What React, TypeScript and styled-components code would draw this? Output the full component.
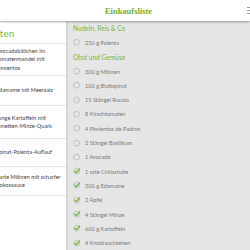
import React from "react";
import styled, { createGlobalStyle } from "styled-components";

const GlobalStyle = createGlobalStyle`
  html, body { margin: 0; padding: 0; }
  body {
    background: #e6e6e6;
    font-family: Lato, "Open Sans", sans-serif;
    overflow: hidden;
  }
`;

const Page = styled.div`
  width: 250px;
  height: 250px;
  display: flex;
  flex-direction: column;
  overflow: hidden;
`;

const Header = styled.header`
  height: 21px;
  flex: none;
  background: #ffffff;
  display: grid;
  grid-template-columns: 1fr auto 1fr;
  align-items: center;
  box-shadow: 0 1px 2px rgba(0, 0, 0, 0.35);
  position: relative;
  z-index: 2;
`;

const Title = styled.h1`
  grid-column: 2;
  margin: 0 0 0 7px;
  font-family: "Liberation Serif", serif;
  font-weight: bold;
  font-size: 8.5px;
  color: #76ad36;
`;

const MenuIcon = styled.div`
  grid-column: 3;
  justify-self: end;
  margin-right: -2px;
  width: 5px;
  height: 7px;
  display: flex;
  flex-direction: column;
  justify-content: space-between;
  span {
    display: block;
    height: 1px;
    background: #9a9a9a;
  }
`;

const Body = styled.div`
  flex: 1;
  display: flex;
  min-height: 0;
`;

const Sidebar = styled.aside`
  width: 74px;
  margin-left: -8px;
  flex: none;
  background: #ffffff;
  border-right: 1px solid #d6d6d6;
  box-shadow: 1px 0 1px rgba(0, 0, 0, 0.06);
  display: flex;
  flex-direction: column;
  padding-top: 1px;
`;

const SideTitle = styled.div`
  height: 21px;
  display: flex;
  align-items: center;
  border-bottom: 1px solid #e4e4e4;
  overflow: hidden;
  span {
    margin-left: -12px;
    font-size: 10px;
    color: #7ab53a;
  }
`;

const Recipe = styled.div<{ $h: number }>`
  height: ${(p) => p.$h}px;
  display: flex;
  align-items: center;
  padding-left: 4px;
  border-bottom: 1px solid #e4e4e4;
  font-size: 5.6px;
  line-height: 8.3px;
  color: #454545;
`;

const Main = styled.main`
  flex: 1;
  padding-left: 6px;
  display: flex;
  flex-direction: column;
`;

const Section = styled.div`
  height: 14.3px;
  display: flex;
  align-items: center;
  font-size: 6.6px;
  color: #7ab53a;
`;

const Item = styled.div`
  height: 14.3px;
  display: flex;
  align-items: center;
  gap: 4px;
  font-size: 5.6px;
  color: #7a7a7a;
`;

const Check = ({ on }: { on: boolean }) => (
  <svg width="8" height="8" viewBox="0 0 8 8" style={{ flex: "none", overflow: "visible" }}>
    <circle cx="3.6" cy="4.2" r="2.9" fill="none" stroke="#a8a8a8" strokeWidth="0.6" />
    {on && (
      <path d="M1.8 4.1 L3.3 5.6 L6.6 2.0" fill="none" stroke="#6fb234" strokeWidth="1.2" strokeLinecap="round" strokeLinejoin="round" />
    )}
  </svg>
);

const recipes: { lines: string[]; h: number }[] = [
  { lines: ["Avocadobällchen im", "Tomatenmandel mit", "Pimientos"], h: 31 },
  { lines: ["Edamame mit Meersalz"], h: 29 },
  { lines: ["Junge Kartoffeln mit", "Limetten-Minze-Quark"], h: 32 },
  { lines: ["Spinat-Polenta-Auflauf"], h: 27 },
  { lines: ["Zarte Möhren mit scharfer", "Kokossauce"], h: 28 },
];

type Row = { kind: "section"; text: string } | { kind: "item"; text: string; on: boolean };

const rows: Row[] = [
  { kind: "section", text: "Nudeln, Reis & Co" },
  { kind: "item", text: "250 g Polenta", on: false },
  { kind: "section", text: "Obst und Gemüse" },
  { kind: "item", text: "300 g Möhren", on: false },
  { kind: "item", text: "100 g Blattspinat", on: false },
  { kind: "item", text: "15 Stängel Rucola", on: false },
  { kind: "item", text: "8 Kirschtomaten", on: false },
  { kind: "item", text: "4 Pimientos de Padron", on: false },
  { kind: "item", text: "2 Stängel Basilikum", on: false },
  { kind: "item", text: "1 Avocado", on: false },
  { kind: "item", text: "1 rote Chilischote", on: true },
  { kind: "item", text: "500 g Edamame", on: true },
  { kind: "item", text: "2 Äpfel", on: true },
  { kind: "item", text: "4 Stängel Minze", on: true },
  { kind: "item", text: "600 g Kartoffeln", on: true },
  { kind: "item", text: "4 Knoblauchzehen", on: true },
];

export default function App() {
  return (
    <Page>
      <GlobalStyle />
      <Header>
        <Title>Einkaufsliste</Title>
        <MenuIcon>
          <span />
          <span />
          <span />
        </MenuIcon>
      </Header>
      <Body>
        <Sidebar>
          <SideTitle>
            <span>Zutaten</span>
          </SideTitle>
          {recipes.map((r, i) => (
            <Recipe key={i} $h={r.h}>
              <div>
                {r.lines.map((l, j) => (
                  <div key={j}>{l}</div>
                ))}
              </div>
            </Recipe>
          ))}
        </Sidebar>
        <Main>
          {rows.map((r, i) =>
            r.kind === "section" ? (
              <Section key={i}>{r.text}</Section>
            ) : (
              <Item key={i}>
                <Check on={r.on} />
                {r.text}
              </Item>
            )
          )}
        </Main>
      </Body>
    </Page>
  );
}
